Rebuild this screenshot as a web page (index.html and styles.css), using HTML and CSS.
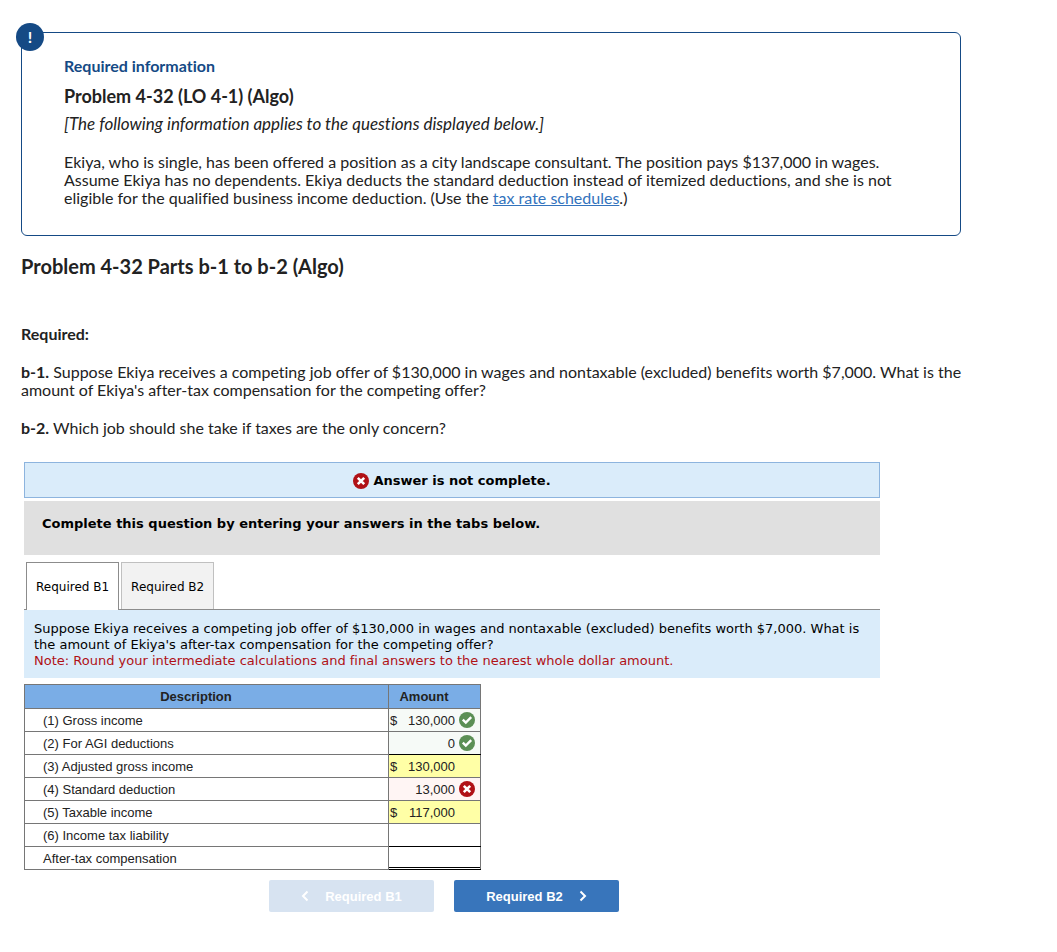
FILE: index.html
```html
<!DOCTYPE html>
<html lang="en">

<head>
  <meta charset="UTF-8" />
  <meta name="viewport" content="width=device-width, initial-scale=1" />
  <title>Problem 4-32 Parts b-1 to b-2 (Algo)</title>
  <link rel="stylesheet" href="styles.css">
</head>

<body>
  <!-- shared icons -->
  <svg class="sprite" aria-hidden="true">
    <symbol id="icon-wrong" viewBox="0 0 16 16">
      <circle cx="8" cy="8" r="8" fill="#b01116" />
      <path d="M4.800 4.800l6.400 6.400M11.200 4.800l-6.400 6.400" stroke="#fff" stroke-width="2.600" />
    </symbol>
    <symbol id="icon-right" viewBox="0 0 16 16">
      <circle cx="8" cy="8" r="8" fill="#5b8f55" />
      <path d="M3.800 7.600l3 3 5.400-5.400" fill="none" stroke="#fff" stroke-width="2.400" />
    </symbol>
  </svg>

  <main class="page">
    <section class="info-box">
      <div class="info-badge">!</div>
      <h2 class="info-label">Required information</h2>
      <h3 class="info-title">Problem 4-32 (LO 4-1) (Algo)</h3>
      <p class="info-note">[The following information applies to the questions displayed below.]</p>
      <p>Ekiya, who is single, has been offered a position as a city landscape consultant. The position pays $137,000 in wages.
        Assume Ekiya has no dependents. Ekiya deducts the standard deduction instead of itemized deductions, and she is not
        eligible for the qualified business income deduction. (Use the <a href="#">tax rate schedules</a>.)</p>
    </section>

    <h1 class="part-title">Problem 4-32 Parts b-1 to b-2 (Algo)</h1>

    <section class="required">
      <p><b>Required:</b></p>
      <p><b>b-1.</b> Suppose Ekiya receives a competing job offer of $130,000 in wages and nontaxable (excluded) benefits worth $7,000. What is the amount of Ekiya's after-tax compensation for the competing offer?</p>
      <p><b>b-2.</b> Which job should she take if taxes are the only concern?</p>
    </section>

    <section class="question">
      <div class="result">
        <svg class="icon"><use href="#icon-wrong" /></svg>
        <span>Answer is not complete.</span>
      </div>
      <div class="instructions">Complete this question by entering your answers in the tabs below.</div>

      <div class="tabs" role="tablist">
        <button class="tab active" type="button" role="tab" aria-selected="true">Required B1</button>
        <button class="tab" type="button" role="tab" aria-selected="false">Required B2</button>
      </div>
      <div class="prompt">
        <p>Suppose Ekiya receives a competing job offer of $130,000 in wages and nontaxable (excluded) benefits worth $7,000. What is the amount of Ekiya's after-tax compensation for the competing offer?</p>
        <p class="prompt-note">Note: Round your intermediate calculations and final answers to the nearest whole dollar amount.</p>
      </div>

      <table class="sheet">
        <thead>
          <tr>
            <th class="col-desc">Description</th>
            <th class="col-amount">Amount</th>
          </tr>
        </thead>
        <tbody>
          <tr>
            <td><label for="gross">(1) Gross income</label></td>
            <td class="right">
              <div class="cell"><span>$</span><input type="text" id="gross" value="130,000"><svg class="icon"><use href="#icon-right" /></svg></div>
            </td>
          </tr>
          <tr>
            <td><label for="agi">(2) For AGI deductions</label></td>
            <td class="right subtotal">
              <div class="cell"><span></span><input type="text" id="agi" value="0"><svg class="icon"><use href="#icon-right" /></svg></div>
            </td>
          </tr>
          <tr>
            <td>(3) Adjusted gross income</td>
            <td class="computed">
              <div class="cell"><span>$</span><output>130,000</output><i class="icon"></i></div>
            </td>
          </tr>
          <tr>
            <td><label for="standard">(4) Standard deduction</label></td>
            <td class="wrong">
              <div class="cell"><span></span><input type="text" id="standard" value="13,000"><svg class="icon"><use href="#icon-wrong" /></svg></div>
            </td>
          </tr>
          <tr>
            <td>(5) Taxable income</td>
            <td class="computed">
              <div class="cell"><span>$</span><output>117,000</output><i class="icon"></i></div>
            </td>
          </tr>
          <tr>
            <td><label for="tax">(6) Income tax liability</label></td>
            <td class="subtotal">
              <div class="cell"><span></span><input type="text" id="tax"><i class="icon"></i></div>
            </td>
          </tr>
          <tr>
            <td><label for="net">After-tax compensation</label></td>
            <td class="total">
              <div class="cell"><span></span><input type="text" id="net"><i class="icon"></i></div>
            </td>
          </tr>
        </tbody>
      </table>

      <div class="pager">
        <button class="pager-btn" type="button" disabled>
          <svg viewBox="0 0 8 12"><path d="M6.500 1.500L2 6l4.500 4.500" /></svg>
          Required B1
        </button>
        <button class="pager-btn" type="button">
          Required B2
          <svg viewBox="0 0 8 12"><path d="M1.500 1.500L6 6l-4.500 4.500" /></svg>
        </button>
      </div>
    </section>
  </main>
</body>

</html>
```
FILE: styles.css
```css
:root {
  --navy: #154a85;
  --text: #222;
  --pale-blue: #daecfa;
  --grid: #767676;
  --body-font: Lato, "Open Sans", sans-serif;
  --verdana: Verdana, "DejaVu Sans", sans-serif;
  --arial: Arial, "Liberation Sans", sans-serif;
}

* {
  box-sizing: border-box;
  margin: 0;
  padding: 0;
}

body {
  background: #fff;
  color: var(--text);
  font-family: var(--body-font);
  font-size: 16px;
  font-variant-ligatures: none;
  line-height: 18px;
}

.sprite {
  position: absolute;
  width: 0;
  height: 0;
}

.icon {
  flex: none;
  width: 16px;
  height: 16px;
}

.page {
  padding: 32px 88px 32px 21px;
}

.info-box {
  position: relative;
  margin-right: 8px;
  padding: 23px 42px 28px;
  border: 1px solid var(--navy);
  border-radius: 6px;
}

.info-badge {
  position: absolute;
  top: -10px;
  left: -6px;
  width: 28px;
  height: 28px;
  border-radius: 50%;
  background: var(--navy);
  color: #fff;
  font-weight: 700;
  line-height: 28px;
  text-align: center;
}

.info-label {
  margin-bottom: 11px;
  color: var(--navy);
  font-size: 16px;
  line-height: 20px;
}

.info-title {
  margin-bottom: 10px;
  font-size: 18px;
  line-height: 18px;
}

.info-note {
  margin-bottom: 20px;
  font-size: 17px;
  font-style: italic;
}

.info-box a {
  color: #3373bd;
}

.part-title {
  margin: 19px 0 48px;
  font-size: 20px;
  line-height: 22px;
}

.required p {
  margin-bottom: 20px;
}

.question {
  margin: 25px 89px 0 3px;
  color: #000;
  font-family: var(--verdana);
  font-size: 13px;
  line-height: 16px;
}

.result {
  display: flex;
  align-items: center;
  justify-content: center;
  gap: 4px;
  height: 36px;
  margin-bottom: 3px;
  padding-top: 2px;
  border: 1px solid #8db4de;
  background: var(--pale-blue);
  font-weight: 700;
}

.instructions {
  margin-bottom: 7px;
  padding: 15px 18px 23px;
  background: #e0e0e0;
  font-weight: 700;
}

.tabs {
  display: flex;
  gap: 2px;
  padding-left: 2px;
  border-bottom: 1px solid #8c8c8c;
}

.tab {
  height: 47px;
  padding: 2px 9px 0;
  border: 1px solid #c0c0c0;
  border-bottom: 0;
  background: #f2f2f2;
  color: #000;
  font-family: var(--verdana);
  font-size: 12px;
  cursor: pointer;
}

.tab.active {
  height: 48px;
  margin-bottom: -1px;
  padding-top: 0;
  border-color: #8c8c8c;
  background: #fff;
}

.prompt {
  margin-bottom: 6px;
  padding: 11px 10px 9px;
  background: var(--pale-blue);
}

.prompt-note {
  color: #b01116;
}

.sheet {
  border-collapse: collapse;
  color: var(--text);
  font-family: var(--arial);
  font-size: 13px;
}

.sheet th,
.sheet td {
  border: 1px solid var(--grid);
}

.sheet th {
  height: 24px;
  padding-right: 21px;
  background: #7aade6;
}

.col-desc {
  width: 364px;
}

.col-amount {
  width: 92px;
}

.sheet td {
  height: 23px;
}

.sheet td:first-child {
  padding: 2px 0 0 18px;
}

.cell {
  display: flex;
  align-items: center;
  gap: 4px;
  height: 22px;
  padding: 0 5px 0 1px;
}

.cell span,
.cell input,
.cell output {
  padding-top: 2px;
}

.cell input,
.cell output {
  flex: 1;
  min-width: 0;
  width: 0;
  border: 0;
  background: none;
  color: inherit;
  font: inherit;
  text-align: right;
}

.right {
  background: #f6faf7;
}

.wrong {
  background: #fff5f4;
}

.computed {
  background: #ffffa6;
}

.sheet .subtotal,
.sheet .total {
  border-bottom-color: #000;
}

.total .cell {
  margin-bottom: 1px;
  height: 21px;
  border-bottom: 1px solid #000;
}

.pager {
  display: flex;
  justify-content: center;
  gap: 20px;
  margin-top: 10px;
  padding-right: 16px;
}

.pager-btn {
  display: flex;
  align-items: center;
  justify-content: center;
  gap: 16px;
  width: 165px;
  height: 32px;
  border: 0;
  border-radius: 2px;
  background: #3875bb;
  color: #fff;
  font-family: var(--arial);
  font-size: 13px;
  font-weight: 700;
  cursor: pointer;
}

.pager-btn:disabled {
  background: #d7e3f1;
  cursor: default;
}

.pager-btn svg {
  width: 8px;
  height: 12px;
  fill: none;
  stroke: currentColor;
  stroke-width: 2;
}
```
